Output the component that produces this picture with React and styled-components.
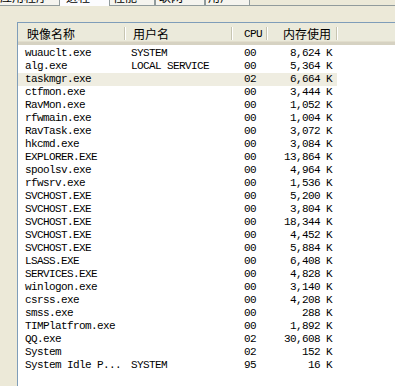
import React from "react";
import styled, { createGlobalStyle } from "styled-components";

const Global = createGlobalStyle`
  html, body {
    margin: 0;
    padding: 0;
    background: #ECE9D8;
    overflow: hidden;
    width: 395px;
    height: 386px;
  }
  #root { width: 395px; height: 386px; overflow: hidden; }
`;

const Window = styled.div`
  width: 395px;
  height: 386px;
  overflow: hidden;
  background: #ECE9D8;
  display: flex;
  flex-direction: column;
`;

const TabStrip = styled.div`
  display: flex;
  align-items: flex-end;
  margin-top: -9px;
  height: 14px;
  border-bottom: 1px solid #919B9C;
  flex: none;
  font-family: "Noto Sans CJK SC", "Liberation Sans", sans-serif;
  font-size: 12px;
`;

const Tab = styled.div`
  box-sizing: border-box;
  width: ${(p) => p.$w}px;
  height: ${(p) => (p.$active ? 15 : 14)}px;
  margin-bottom: ${(p) => (p.$active ? -1 : 0)}px;
  padding-left: ${(p) => p.$pad}px;
  line-height: 12px;
  color: #000;
  white-space: nowrap;
  overflow: hidden;
  background: ${(p) => (p.$active ? "#FCFCFE" : "#F5F4EF")};
  border-right: 1px solid #919B9C;
  border-left: ${(p) => (p.$first ? "none" : "1px solid #919B9C")};
  ${(p) => (p.$active ? "border-left: none; border-right: none; position: relative; z-index: 1;" : "")}
`;

const Panel = styled.div`
  flex: 1;
  padding: 16px 0 0 17px;
  display: flex;
  min-height: 0;
`;

const ListView = styled.div`
  flex: 1;
  background: #fff;
  border-top: 1px solid #7F9DB9;
  border-left: 1px solid #7F9DB9;
  display: flex;
  flex-direction: column;
  overflow: hidden;
`;

const HeaderRow = styled.div`
  display: grid;
  grid-template-columns: 107px 107px 35px 70px 1fr;
  height: 19px;
  background: #EBEADB;
  border-bottom: 3px solid #D6D2C2;
  box-shadow: inset 0 -1px 0 #E2DECD;
  flex: none;
`;

const HeaderCell = styled.div`
  position: relative;
  display: flex;
  align-items: center;
  justify-content: ${(p) => (p.$right ? "flex-end" : "flex-start")};
  padding-left: ${(p) => p.$pl || 0}px;
  padding-right: ${(p) => p.$pr || 0}px;
  font-family: ${(p) =>
    p.$mono
      ? '"Liberation Mono", monospace'
      : '"Noto Sans CJK SC", "Liberation Sans", sans-serif'};
  font-size: ${(p) => (p.$mono ? "11px" : "12px")};
  letter-spacing: ${(p) => (p.$mono ? "-0.6px" : "0")};
  color: #000;
  padding-top: 2px;
  white-space: nowrap;
`;

const Sep = styled.span`
  position: absolute;
  right: 0;
  top: 4px;
  bottom: 2px;
  width: 1px;
  background: #C7C5B2;
  box-shadow: 1px 0 0 #fff;
`;

const Rows = styled.div`
  display: flex;
  flex-direction: column;
  padding-top: 2px;
`;

const Row = styled.div`
  display: grid;
  grid-template-columns: 107px 107px 35px 70px;
  width: 319px;
  height: 13px;
  line-height: 13px;
  background: ${(p) => (p.$sel ? "#EFEDE1" : "transparent")};
  font-family: "Liberation Mono", monospace;
  font-size: 11px;
  letter-spacing: -0.6px;
  color: #000;
  white-space: nowrap;
`;

const Cell = styled.div`
  overflow: hidden;
  padding-left: ${(p) => p.$pl || 0}px;
  padding-right: ${(p) => p.$pr || 0}px;
  text-align: ${(p) => (p.$right ? "right" : "left")};
`;

const tabs = [
  { label: "应用程序", w: 60, pad: 0, first: true },
  { label: "进程", w: 49, pad: 6, active: true },
  { label: "性能", w: 46, pad: 3 },
  { label: "联网", w: 50, pad: 3 },
  { label: "用户", w: 45, pad: 2 },
];

const procs = [
  ["wuauclt.exe", "SYSTEM", "00", "8,624 K"],
  ["alg.exe", "LOCAL SERVICE", "00", "5,364 K"],
  ["taskmgr.exe", "", "02", "6,664 K", true],
  ["ctfmon.exe", "", "00", "3,444 K"],
  ["RavMon.exe", "", "00", "1,052 K"],
  ["rfwmain.exe", "", "00", "1,004 K"],
  ["RavTask.exe", "", "00", "3,072 K"],
  ["hkcmd.exe", "", "00", "3,084 K"],
  ["EXPLORER.EXE", "", "00", "13,864 K"],
  ["spoolsv.exe", "", "00", "4,964 K"],
  ["rfwsrv.exe", "", "00", "1,536 K"],
  ["SVCHOST.EXE", "", "00", "5,200 K"],
  ["SVCHOST.EXE", "", "00", "3,804 K"],
  ["SVCHOST.EXE", "", "00", "18,344 K"],
  ["SVCHOST.EXE", "", "00", "4,452 K"],
  ["SVCHOST.EXE", "", "00", "5,884 K"],
  ["LSASS.EXE", "", "00", "6,408 K"],
  ["SERVICES.EXE", "", "00", "4,828 K"],
  ["winlogon.exe", "", "00", "3,140 K"],
  ["csrss.exe", "", "00", "4,208 K"],
  ["smss.exe", "", "00", "288 K"],
  ["TIMPlatfrom.exe", "", "00", "1,892 K"],
  ["QQ.exe", "", "02", "30,608 K"],
  ["System", "", "02", "152 K"],
  ["System Idle P...", "SYSTEM", "95", "16 K"],
];

export default function App() {
  return (
    <Window>
      <Global />
      <TabStrip>
        {tabs.map((t) => (
          <Tab key={t.label} $w={t.w} $pad={t.pad} $active={t.active} $first={t.first}>
            {t.label}
          </Tab>
        ))}
      </TabStrip>
      <Panel>
        <ListView>
          <HeaderRow>
            <HeaderCell $pl={9}>映像名称<Sep /></HeaderCell>
            <HeaderCell $pl={8}>用户名<Sep /></HeaderCell>
            <HeaderCell $pl={12} $mono>CPU<Sep /></HeaderCell>
            <HeaderCell $right $pr={6}>内存使用<Sep /></HeaderCell>
            <HeaderCell />
          </HeaderRow>
          <Rows>
            {procs.map((p, i) => (
              <Row key={i} $sel={p[4]}>
                <Cell $pl={7}>{p[0]}</Cell>
                <Cell $pl={6}>{p[1]}</Cell>
                <Cell $pl={12}>{p[2]}</Cell>
                <Cell $right $pr={5}>{p[3]}</Cell>
              </Row>
            ))}
          </Rows>
        </ListView>
      </Panel>
    </Window>
  );
}
